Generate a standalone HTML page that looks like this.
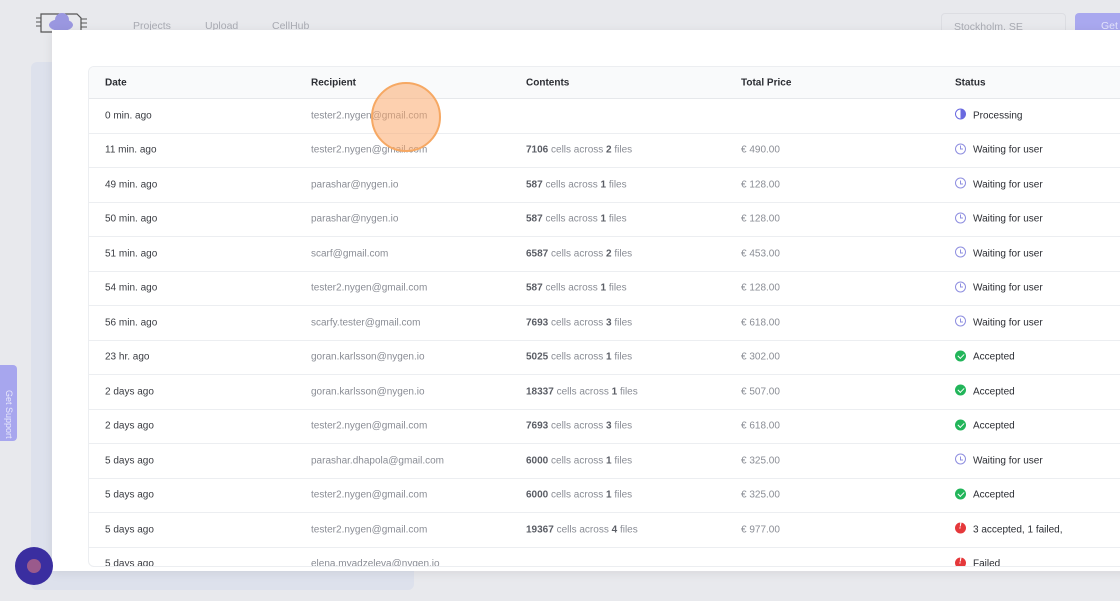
<!DOCTYPE html>
<html><head><meta charset="utf-8"><style>
*{margin:0;padding:0;box-sizing:border-box}
body{width:1120px;height:601px;overflow:hidden;background:#e8e9ed;font-family:"Liberation Sans",sans-serif;position:relative}
.nav{position:absolute;top:20px;font-size:10.5px;color:#a9abb3}
.side{position:absolute;left:31px;top:62px;width:383px;height:528px;background:#dde1ec;border-radius:6px}
.modal{position:absolute;left:52px;top:30px;width:1080px;height:541px;background:#fff;box-shadow:0 2px 10px rgba(0,0,0,.08)}
.card{position:absolute;left:36px;top:36px;width:1060px;height:501px;border:1px solid #eceef1;border-radius:6px;overflow:hidden}
.hdr{height:32px;background:#f9fafb;border-bottom:1px solid #e6e8eb;position:relative;font-size:10px;font-weight:bold;color:#2b2d33}
.row{height:34.5px;border-bottom:1px solid #eceef1;position:relative;font-size:10px;color:#8a8d95}
.c{position:absolute;top:50%;transform:translateY(-50%);white-space:nowrap}
.d{left:16px;color:#3a3c42}.r{left:222px}.ct{left:437px}.ct b{color:#5a5d65}.p{left:652px}
.s{left:866px;color:#2b2d33;display:flex;align-items:center;gap:7px}
.ic{width:11px;height:11px;border-radius:50%;display:inline-block;position:relative;margin-top:-3px}
.ok{background:#22b55a}.ok:after{content:"";position:absolute;left:3.5px;top:2px;width:3px;height:5px;border:solid #fff;border-width:0 1.3px 1.3px 0;transform:rotate(45deg)}
.err{background:#e5383b}.err:after{content:"!";position:absolute;left:4px;top:-1px;color:#fff;font-size:8px;font-weight:bold}
.wt{border:1.2px solid #8f8fe0}.wt:after{content:"";position:absolute;left:3.5px;top:1.5px;width:2px;height:3px;border-left:1px solid #8f8fe0;border-bottom:1px solid #8f8fe0}
.pr{border:1.5px solid #6a6ae0;background:conic-gradient(#6a6ae0 0 50%,#fff 50%)}
</style></head><body>
<svg style="position:absolute;left:35px;top:10px" width="58" height="28" viewBox="0 0 58 28"><path d="M6 4h36l4 4v14H6z" fill="none" stroke="#555" stroke-width="1.2"/><path d="M1 8h5M1 12h5M1 16h5M46 9h6M46 13h6M46 17h6" stroke="#555"/><ellipse cx="26" cy="15" rx="12" ry="6" fill="#9a97e0"/><circle cx="27" cy="10" r="7" fill="#9a97e0"/></svg>
<div class="nav" style="left:133px">Projects</div><div class="nav" style="left:205px">Upload</div><div class="nav" style="left:272px">CellHub</div>
<div style="position:absolute;left:941px;top:13px;width:125px;height:26px;border:1px solid #dcdde2;border-radius:4px;font-size:10.5px;color:#a9abb3;padding:7px 12px">Stockholm, SE</div>
<div style="position:absolute;left:1075px;top:13px;width:60px;height:26px;background:#a9a8ef;border-radius:4px;font-size:10.5px;color:#e4e4fb;padding:7px 0 0 26px">Get S</div>
<div class="side"></div>
<div style="position:absolute;left:0;top:365px;width:17px;height:76px;background:#a7a6ee;border-radius:0 4px 4px 0"></div>
<div style="position:absolute;left:4px;top:390px;font-size:9px;color:#e8e8fb;writing-mode:vertical-rl">Get Support</div>
<div class="modal"><div class="card">
<div class="hdr"><span class="c d" style="color:#2b2d33">Date</span><span class="c r" style="color:#2b2d33">Recipient</span><span class="c ct" style="color:#2b2d33">Contents</span><span class="c p" style="color:#2b2d33">Total Price</span><span class="c s">Status</span></div>
<div class="row"><span class="c d">0 min. ago</span><span class="c r">tester2.nygen@gmail.com</span><span class="c s"><i class="ic pr"></i>Processing</span></div>
<div class="row"><span class="c d">11 min. ago</span><span class="c r">tester2.nygen@gmail.com</span><span class="c ct"><b>7106</b> cells across <b>2</b> files</span><span class="c p">€ 490.00</span><span class="c s"><i class="ic wt"></i>Waiting for user</span></div>
<div class="row"><span class="c d">49 min. ago</span><span class="c r">parashar@nygen.io</span><span class="c ct"><b>587</b> cells across <b>1</b> files</span><span class="c p">€ 128.00</span><span class="c s"><i class="ic wt"></i>Waiting for user</span></div>
<div class="row"><span class="c d">50 min. ago</span><span class="c r">parashar@nygen.io</span><span class="c ct"><b>587</b> cells across <b>1</b> files</span><span class="c p">€ 128.00</span><span class="c s"><i class="ic wt"></i>Waiting for user</span></div>
<div class="row"><span class="c d">51 min. ago</span><span class="c r">scarf@gmail.com</span><span class="c ct"><b>6587</b> cells across <b>2</b> files</span><span class="c p">€ 453.00</span><span class="c s"><i class="ic wt"></i>Waiting for user</span></div>
<div class="row"><span class="c d">54 min. ago</span><span class="c r">tester2.nygen@gmail.com</span><span class="c ct"><b>587</b> cells across <b>1</b> files</span><span class="c p">€ 128.00</span><span class="c s"><i class="ic wt"></i>Waiting for user</span></div>
<div class="row"><span class="c d">56 min. ago</span><span class="c r">scarfy.tester@gmail.com</span><span class="c ct"><b>7693</b> cells across <b>3</b> files</span><span class="c p">€ 618.00</span><span class="c s"><i class="ic wt"></i>Waiting for user</span></div>
<div class="row"><span class="c d">23 hr. ago</span><span class="c r">goran.karlsson@nygen.io</span><span class="c ct"><b>5025</b> cells across <b>1</b> files</span><span class="c p">€ 302.00</span><span class="c s"><i class="ic ok"></i>Accepted</span></div>
<div class="row"><span class="c d">2 days ago</span><span class="c r">goran.karlsson@nygen.io</span><span class="c ct"><b>18337</b> cells across <b>1</b> files</span><span class="c p">€ 507.00</span><span class="c s"><i class="ic ok"></i>Accepted</span></div>
<div class="row"><span class="c d">2 days ago</span><span class="c r">tester2.nygen@gmail.com</span><span class="c ct"><b>7693</b> cells across <b>3</b> files</span><span class="c p">€ 618.00</span><span class="c s"><i class="ic ok"></i>Accepted</span></div>
<div class="row"><span class="c d">5 days ago</span><span class="c r">parashar.dhapola@gmail.com</span><span class="c ct"><b>6000</b> cells across <b>1</b> files</span><span class="c p">€ 325.00</span><span class="c s"><i class="ic wt"></i>Waiting for user</span></div>
<div class="row"><span class="c d">5 days ago</span><span class="c r">tester2.nygen@gmail.com</span><span class="c ct"><b>6000</b> cells across <b>1</b> files</span><span class="c p">€ 325.00</span><span class="c s"><i class="ic ok"></i>Accepted</span></div>
<div class="row"><span class="c d">5 days ago</span><span class="c r">tester2.nygen@gmail.com</span><span class="c ct"><b>19367</b> cells across <b>4</b> files</span><span class="c p">€ 977.00</span><span class="c s"><i class="ic err"></i>3 accepted, 1 failed,</span></div>
<div class="row"><span class="c d">5 days ago</span><span class="c r">elena.myadzeleva@nygen.io</span><span class="c s"><i class="ic err"></i>Failed</span></div>
</div></div>
<div style="position:absolute;left:371px;top:82px;width:70px;height:70px;border-radius:50%;background:rgba(251,170,110,.55);border:2px solid #f6a863"></div>
<div style="position:absolute;left:15px;top:547px;width:38px;height:38px;border-radius:50%;background:#3a2ea0"><div style="position:absolute;left:12px;top:12px;width:14px;height:14px;border-radius:50%;background:#9a5a8c"></div></div>
</body></html>
